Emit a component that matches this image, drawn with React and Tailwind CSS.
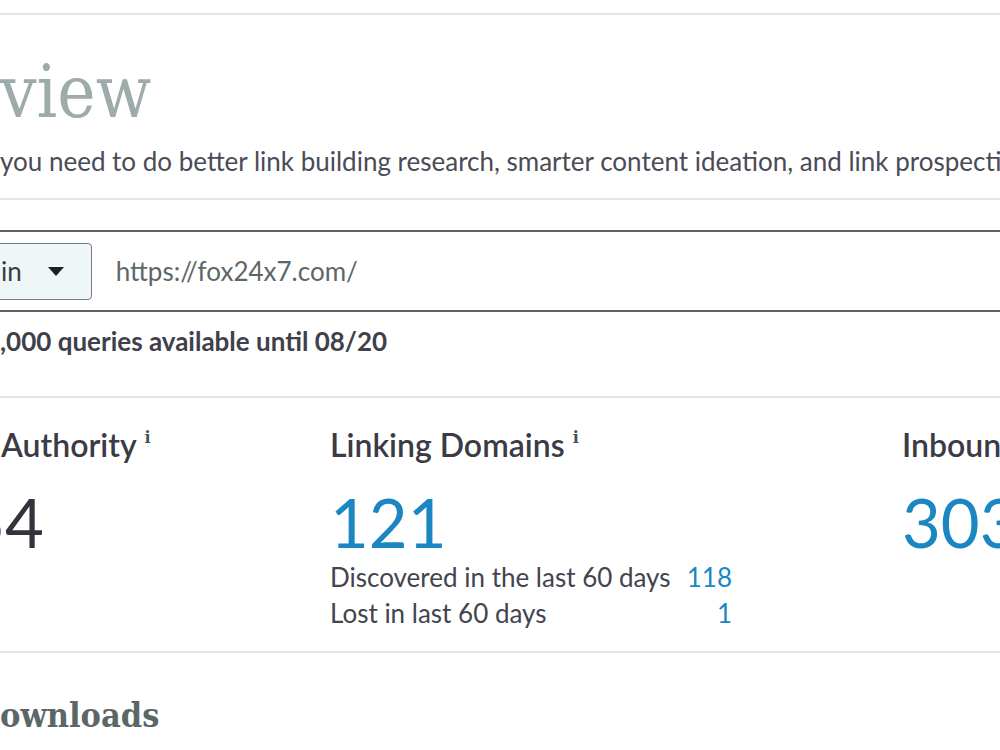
import React from "react";

// Text that runs off the left edge: a zero-width box whose content overflows to the left
const Clip = ({ children }) => (
    <span className="inline-flex w-0 justify-end whitespace-pre">{children}</span>
);

const Rule = ({ className = "" }) => <div className={`h-[2px] bg-[#dfe7e7] ${className}`} />;

const Info = () => (
    <span className="relative -top-[14px] ml-[8px] text-[16px] font-bold text-[#3f5656] [font-family:'DejaVu_Serif',serif]">
        i
    </span>
);

const Caret = () => (
    <svg width="16" height="9" viewBox="0 0 16 9" className="ml-[26px] shrink-0">
        <polygon points="0,0 16,0 8,9" fill="#1f2026" />
    </svg>
);

const StatRow = ({ label, value }) => (
    <div className="flex h-[36px] w-[402px] items-center justify-between leading-[36px]">
        <span className="text-[#44444e]">{label}</span>
        <span className="text-[#1b87c2]">{value}</span>
    </div>
);

export default function App() {
    return (
        <div className="h-[750px] w-[1000px] overflow-hidden bg-white pt-[13px] text-[#3a3b45] [font-family:Lato,'Liberation_Sans',sans-serif]">
            <Rule />

            <h1 className="mt-[41px] h-[72px] whitespace-nowrap text-[72px] leading-none text-[#9eabab] [font-family:'DejaVu_Serif_Condensed','DejaVu_Serif',serif] [font-stretch:condensed]">
                <Clip>Link Explorer Over</Clip>view
            </h1>

            <p className="mt-[20px] h-[26px] whitespace-nowrap text-[26px] leading-[26px] text-[#4b4b57]">
                <Clip>Everything </Clip>you need to do better link building research, smarter content ideation, and link prospecting.
            </p>

            <Rule className="mt-[24px]" />

            <div className="mt-[30px] flex h-[82px] w-[1100px] items-center border-y-2 border-[#5d5f6b]">
                <button className="-ml-[20px] flex h-[57px] shrink-0 items-center rounded-[4px] border border-[#6e7c7c] bg-[#eef6f8] pl-[20px] pr-[27px] text-[26px] text-[#3a3b45]">
                    <span className="whitespace-nowrap">
                        <Clip>Root Doma</Clip>in
                    </span>
                    <Caret />
                </button>
                <span className="ml-[24px] whitespace-nowrap text-[26px] text-[#5e6768]">https://fox24x7.com/</span>
            </div>

            <p className="mt-[16px] h-[26px] whitespace-nowrap text-[26px] font-bold leading-[26px] text-[#3f404a]">
                <Clip>10</Clip>,000 queries available until 08/20
            </p>

            <Rule className="mt-[42px]" />

            <div className="mt-[29px] flex whitespace-nowrap">
                <div className="w-[330px] shrink-0 pl-[1px]">
                    <h3 className="h-[36px] text-[32px] font-semibold leading-[36px]">
                        <Clip>Domain </Clip>Authority
                        <Info />
                    </h3>
                    <div className="mt-[23px] h-[72px] pl-[4px] text-[67px] leading-[72px] text-[#33333d]">
                        <Clip>5</Clip>4
                    </div>
                </div>

                <div className="w-[572px] shrink-0">
                    <h3 className="h-[36px] text-[32px] font-semibold leading-[36px]">
                        Linking Domains
                        <Info />
                    </h3>
                    <div className="mt-[23px] h-[72px] text-[67px] leading-[72px] text-[#1b87c2]">121</div>
                    <div className="mt-[1px] text-[26px]">
                        <StatRow label="Discovered in the last 60 days" value="118" />
                        <StatRow label="Lost in last 60 days" value="1" />
                    </div>
                </div>

                <div className="shrink-0">
                    <h3 className="h-[36px] text-[32px] font-semibold leading-[36px]">
                        Inbound Links
                        <Info />
                    </h3>
                    <div className="mt-[23px] h-[72px] text-[67px] leading-[72px] text-[#1b87c2]">303</div>
                </div>
            </div>

            <Rule className="mt-[20px]" />

            <h2 className="mt-[42px] h-[40px] whitespace-nowrap text-[34px] font-bold leading-[40px] text-[#5b6767] [font-family:'DejaVu_Serif_Condensed','DejaVu_Serif',serif] [font-stretch:condensed]">
                <Clip>D</Clip>ownloads
            </h2>
        </div>
    );
}
